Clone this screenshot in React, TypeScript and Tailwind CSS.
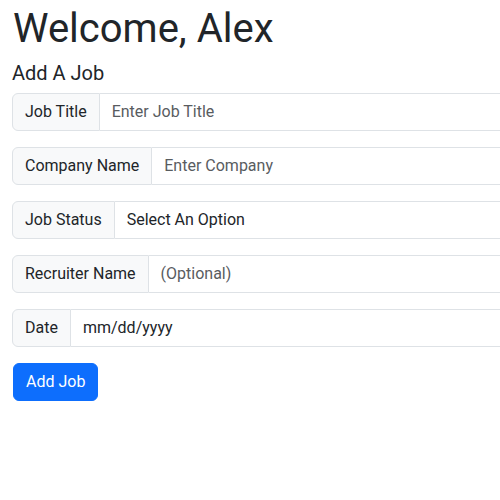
export default function App() {
  const rows: { label: string; value: string; placeholder: boolean }[] = [
    { label: "Job Title", value: "Enter Job Title", placeholder: true },
    { label: "Company Name", value: "Enter Company", placeholder: true },
    { label: "Job Status", value: "Select An Option", placeholder: false },
    { label: "Recruiter Name", value: "(Optional)", placeholder: true },
    { label: "Date", value: "mm/dd/yyyy", placeholder: false },
  ];
  return (
    <div className="w-full h-[500px] overflow-hidden bg-white font-['Roboto',sans-serif] text-[#212529]">
      <div className="w-[760px] px-3 pt-[5px]">
        <h1 className="text-[40px] leading-[48px] font-normal mb-2 pl-[1px]">Welcome, Alex</h1>
        <h5 className="text-[20px] leading-[24px] font-normal mb-2">Add A Job</h5>
        {rows.map((r) => (
          <div key={r.label} className="flex mb-4 text-[16px] leading-[24px]">
            <span className="px-3 py-[6px] bg-[#f8f9fa] border border-[#dee2e6] rounded-l-[6px] whitespace-nowrap">
              {r.label}
            </span>
            <span
              className={
                "flex-1 px-3 py-[6px] border border-l-0 border-[#dee2e6] rounded-r-[6px] bg-white whitespace-nowrap " +
                (r.placeholder ? "text-[#595c5f]" : "text-[#212529]")
              }
            >
              {r.value}
            </span>
          </div>
        ))}
        <button className="ml-[1px] bg-[#0d6efd] text-white text-[16px] leading-[24px] px-3 py-[6px] border border-[#0d6efd] rounded-[6px]">
          Add Job
        </button>
      </div>
    </div>
  );
}
